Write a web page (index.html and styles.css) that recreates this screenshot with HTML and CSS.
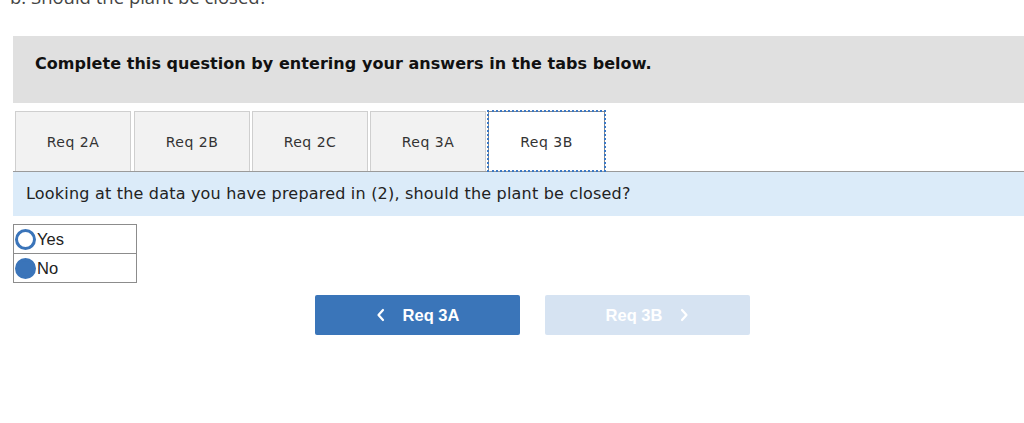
FILE: index.html
```html
<!DOCTYPE html>
<html>
<head>
<meta charset="utf-8">
<link rel="stylesheet" href="styles.css">
</head>
<body>
<div class="page">
  <div class="part-title">b. Should the plant be closed?</div>
  <div class="instructions">Complete this question by entering your answers in the tabs below.</div>
  <div class="tabs">
    <div class="tab">Req 2A</div>
    <div class="tab">Req 2B</div>
    <div class="tab">Req 2C</div>
    <div class="tab">Req 3A</div>
    <div class="tab active">Req 3B</div>
  </div>
  <div class="prompt">Looking at the data you have prepared in (2), should the plant be closed?</div>
  <div class="choices">
    <div class="choice"><span class="radio"></span><span class="label">Yes</span></div>
    <div class="choice"><span class="radio checked"></span><span class="label">No</span></div>
  </div>
  <div class="nav">
    <div class="btn prev">
      <svg class="chev" width="10" height="14" viewBox="0 0 10 14"><path d="M7 2 L2.5 7 L7 12" fill="none" stroke="#fff" stroke-width="2.2" stroke-linecap="round" stroke-linejoin="round"/></svg>
      <span>Req 3A</span>
    </div>
    <div class="btn next">
      <span>Req 3B</span>
      <svg class="chev" width="10" height="14" viewBox="0 0 10 14"><path d="M3 2 L7.5 7 L3 12" fill="none" stroke="#fff" stroke-width="2.2" stroke-linecap="round" stroke-linejoin="round"/></svg>
    </div>
  </div>
</div>
</body>
</html>
```
FILE: styles.css
```css
html, body {
  margin: 0;
  padding: 0;
  overflow: hidden;
  background: #fff;
}
.page {
  width: 1039px;
  padding-left: 13px;
  font-family: "DejaVu Sans", Verdana, sans-serif;
  color: #222;
}
.part-title {
  font-family: "Open Sans", sans-serif;
  font-size: 18.5px;
  line-height: 24px;
  height: 24px;
  margin-top: -15px;
  margin-left: -3px;
  color: #444;
}
.instructions {
  margin-top: 27px;
  background: #e0e0e0;
  height: 67px;
  box-sizing: border-box;
  padding: 18px 0 0 22px;
  font-weight: bold;
  font-size: 16px;
  letter-spacing: 0.05px;
  line-height: 20px;
  color: #111;
}
.tabs {
  display: flex;
  gap: 2px;
  margin-top: 8px;
  padding-left: 2px;
  border-bottom: 1px solid #9a9a9a;
}
.tab {
  width: 116px;
  height: 60px;
  box-sizing: border-box;
  border: 1px solid #cfcfcf;
  border-bottom: none;
  background: #f2f2f2;
  display: flex;
  align-items: center;
  justify-content: center;
  font-size: 14px;
  letter-spacing: 0.5px;
  color: #333;
}
.tab:first-child {
  margin-right: 1px;
}
.tab.active {
  background: #fff;
  width: 117px;
  border: 1px solid #888;
  border-bottom: none;
  outline: 2px dotted #3b78c4;
  outline-offset: -1px;
}
.prompt {
  background: #dbebf9;
  height: 44px;
  box-sizing: border-box;
  padding: 12px 0 0 13px;
  font-size: 16px;
  letter-spacing: 0.2px;
  line-height: 20px;
  color: #222;
}
.choices {
  margin-top: 8px;
  width: 124px;
  border: 1px solid #8c8c8c;
  box-sizing: border-box;
}
.choice {
  height: 28px;
  display: flex;
  align-items: center;
  padding-left: 1px;
  font-family: "Liberation Sans", Arial, sans-serif;
  font-size: 16.5px;
  color: #222;
}
.choice + .choice {
  border-top: 1px solid #8c8c8c;
}
.radio {
  width: 21px;
  height: 21px;
  box-sizing: border-box;
  border: 3px solid #3a74b9;
  border-radius: 50%;
  background: #fff;
  margin-right: 1px;
}
.radio.checked {
  background: #3a74b9;
}
.nav {
  display: flex;
  justify-content: center;
  gap: 25px;
  margin-top: 12px;
}
.btn {
  width: 205px;
  height: 40px;
  border-radius: 2px;
  display: flex;
  align-items: center;
  justify-content: center;
  gap: 17px;
  font-family: "Liberation Sans", Arial, sans-serif;
  font-weight: bold;
  font-size: 16.5px;
  color: #fff;
}
.btn.prev {
  background: #3a75b9;
}
.btn.next {
  background: #d6e3f2;
  color: #fff;
}
.chev {
  display: block;
}
```
